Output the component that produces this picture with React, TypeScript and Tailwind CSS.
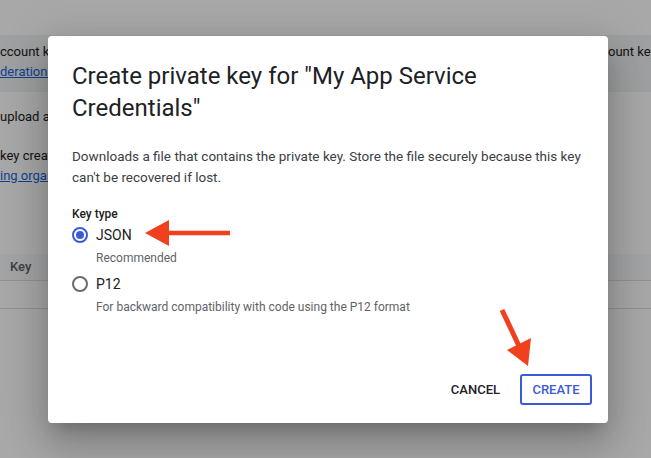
import React from "react"

function Radio({ checked }: { checked?: boolean }) {
  return (
    <span
      className={
        checked
          ? "flex h-4 w-4 items-center justify-center rounded-full border-2 border-[#3b5bd6]"
          : "flex h-4 w-4 items-center justify-center rounded-full border-2 border-[#6b6b6b]"
      }
    >
      {checked && <span className="h-2 w-2 rounded-full bg-[#3b5bd6]" />}
    </span>
  )
}

function Arrows() {
  return (
    <svg className="pointer-events-none absolute inset-0" width="651" height="458" viewBox="0 0 651 458">
      {/* left pointing arrow next to JSON */}
      <line x1="230" y1="233" x2="165" y2="233" stroke="#f0401d" strokeWidth="4.5" />
      <polygon points="145,233 169,220 169,246" fill="#f0401d" />
      {/* diagonal arrow toward CREATE */}
      <line x1="502" y1="310" x2="519" y2="346" stroke="#f0401d" strokeWidth="5" />
      <polygon points="528,366 507,350 531,338" fill="#f0401d" />
    </svg>
  )
}

export default function App() {
  return (
    <div className="relative h-[458px] w-[651px] overflow-hidden bg-white font-['Roboto',sans-serif] text-[#202124]">
      {/* page behind the dialog */}
      <div className="flex flex-col text-[13px] leading-[20px]">
        <div className="h-[35px]" />
        <div className="flex h-[57px] justify-between bg-[#f1f3f4] pt-[7px]">
          <div className="w-[48px] overflow-hidden whitespace-nowrap">
            <div>ccount key</div>
            <div>
              <span className="text-[#1a66dd] underline">deration ...</span>
            </div>
          </div>
          <div className="w-[43px] overflow-hidden whitespace-nowrap">ount key</div>
        </div>
        <div className="mt-[15px] w-[48px] overflow-hidden whitespace-nowrap">upload a</div>
        <div className="mt-[19px] w-[48px] overflow-hidden whitespace-nowrap">
          <div>key creat</div>
          <div className="text-[#1a66dd] underline">ing organ</div>
        </div>
        <div className="mt-[68px] flex h-[27px] items-center border-b border-[#dadce0] bg-[#f8f9fa] pl-[10px] text-[13px] font-medium text-[#5f6368]">
          Key
        </div>
        <div className="h-[28px] border-b border-[#dadce0]" />
      </div>

      {/* scrim */}
      <div className="absolute inset-0 bg-black/[0.34]" />

      {/* dialog */}
      <div className="absolute inset-0 pl-[48px] pt-[36px]">
        <div className="flex h-[387px] w-[560px] flex-col rounded-[4px] bg-white pt-6 pr-4 pb-[18px] pl-6 shadow-[0_11px_15px_-7px_rgba(0,0,0,0.2),0_24px_38px_3px_rgba(0,0,0,0.14),0_9px_46px_8px_rgba(0,0,0,0.12)]">
          <h2 className="pr-2 text-[24px] leading-[32px] font-normal text-[#202124]">
            Create private key for "My App Service Credentials"
          </h2>
          <p className="mt-[22px] text-[13.5px] leading-[21px] text-[#3c4043]">
            Downloads a file that contains the private key. Store the file securely because this key can't be recovered if lost.
          </p>
          <div className="mt-[18px] text-[12px] leading-[16px] font-medium text-[#202124]">Key type</div>
          <div className="mt-[3px] flex h-5 items-center gap-2">
            <Radio checked />
            <span className="text-[14px] text-[#202124]">JSON</span>
          </div>
          <div className="mt-[5px] pl-6 text-[12px] leading-[16px] text-[#5f6368]">Recommended</div>
          <div className="mt-[8px] flex h-5 items-center gap-2">
            <Radio />
            <span className="text-[14px] text-[#202124]">P12</span>
          </div>
          <div className="mt-[5px] pl-6 text-[12px] leading-[16px] text-[#5f6368]">
            For backward compatibility with code using the P12 format
          </div>
          <div className="mt-auto flex items-center justify-end">
            <button className="mr-[12px] h-[31px] px-2 text-[13px] font-medium text-[#202124]">CANCEL</button>
            <button className="h-[31px] w-[72px] rounded-[3px] border-2 border-[#3b5bd6] text-[13px] font-medium text-[#3b5bd6]">
              CREATE
            </button>
          </div>
        </div>
      </div>

      <Arrows />
    </div>
  )
}
